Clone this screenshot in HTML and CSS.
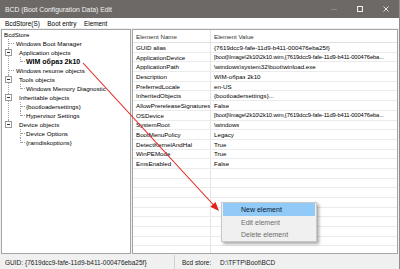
FILE: index.html
```html
<!DOCTYPE html>
<html lang="en">
<head>
    <meta charset="UTF-8">
    <title>BCD (Boot Configuration Data) Edit</title>
    <link rel="stylesheet" href="styles.css">
</head>
<body>
<div class="window">
    <div class="titlebar">
        <span class="title">BCD (Boot Configuration Data) Edit</span>
        <div class="controls">
            <span class="btn"><svg width="6" height="6" viewBox="0 0 6 6"><path d="M0 3.5h6" stroke="#8d8987" stroke-width="1"/></svg></span>
            <span class="btn"><svg width="6" height="6" viewBox="0 0 6 6"><rect x="0.5" y="0.5" width="5" height="5" fill="none" stroke="#eeeeee" stroke-width="1"/></svg></span>
            <span class="btn"><svg width="6" height="6" viewBox="0 0 6 6"><path d="M0.5 0.5l5 5M5.5 0.5l-5 5" stroke="#eeeeee" stroke-width="0.9"/></svg></span>
        </div>
    </div>

    <div class="menubar">
        <span>BcdStore(S)</span>
        <span>Boot entry</span>
        <span>Element</span>
    </div>

    <div class="main">
        <div class="tree">
            <div class="node root">BcdStore</div>
            <ul class="branch">
                <li><div class="node"><i class="stub"></i>Windows Boot Manager</div></li>
                <li>
                    <div class="node"><i class="box"></i>Application objects</div>
                    <ul class="branch sub">
                        <li><div class="node"><i class="stub"></i><b>WIM образ 2k10</b></div></li>
                    </ul>
                </li>
                <li><div class="node"><i class="stub"></i>Windows resume objects</div></li>
                <li>
                    <div class="node"><i class="box"></i>Tools objects</div>
                    <ul class="branch sub">
                        <li><div class="node"><i class="stub"></i>Windows Memory Diagnostic</div></li>
                    </ul>
                </li>
                <li>
                    <div class="node"><i class="box"></i>Inheritable objects</div>
                    <ul class="branch sub">
                        <li><div class="node"><i class="stub"></i>{bootloadersettings}</div></li>
                        <li><div class="node"><i class="stub"></i>Hypervisor Settings</div></li>
                    </ul>
                </li>
                <li>
                    <div class="node"><i class="box"></i>Device objects</div>
                    <ul class="branch sub">
                        <li><div class="node"><i class="stub"></i>Device Options</div></li>
                        <li><div class="node"><i class="stub"></i>{ramdiskoptions}</div></li>
                    </ul>
                </li>
            </ul>
        </div>

        <div class="list">
            <div class="lrow head"><span class="name">Element Name</span><span class="value">Element Value</span></div>
            <div class="lrow"><span class="name">GUID alias</span><span class="value">{7619dcc9-fafe-11d9-b411-000476eba25f}</span></div>
            <div class="lrow"><span class="name">ApplicationDevice</span><span class="value long">[boot]\Image\2k10\2k10.wim,{7619dcc9-fafe-11d9-b411-000476eba...</span></div>
            <div class="lrow"><span class="name">ApplicationPath</span><span class="value">\windows\system32\boot\winload.exe</span></div>
            <div class="lrow"><span class="name">Description</span><span class="value">WIM-образ 2k10</span></div>
            <div class="lrow"><span class="name">PreferredLocale</span><span class="value">en-US</span></div>
            <div class="lrow"><span class="name">InheritedObjects</span><span class="value">{bootloadersettings}...</span></div>
            <div class="lrow"><span class="name">AllowPrereleaseSignatures</span><span class="value">False</span></div>
            <div class="lrow"><span class="name">OSDevice</span><span class="value long">[boot]\Image\2k10\2k10.wim,{7619dcc9-fafe-11d9-b411-000476eba...</span></div>
            <div class="lrow"><span class="name">SystemRoot</span><span class="value">\windows</span></div>
            <div class="lrow"><span class="name">BootMenuPolicy</span><span class="value">Legacy</span></div>
            <div class="lrow"><span class="name">DetectKernelAndHal</span><span class="value">True</span></div>
            <div class="lrow"><span class="name">WinPEMode</span><span class="value">True</span></div>
            <div class="lrow"><span class="name">EmsEnabled</span><span class="value">False</span></div>
            <div class="lrow"><span class="name"></span><span class="value"></span></div>
            <div class="lrow"><span class="name"></span><span class="value"></span></div>
            <div class="lrow"><span class="name"></span><span class="value"></span></div>
            <div class="lrow"><span class="name"></span><span class="value"></span></div>
            <div class="lrow"><span class="name"></span><span class="value"></span></div>
            <div class="lrow"><span class="name"></span><span class="value"></span></div>
            <div class="lrow"><span class="name"></span><span class="value"></span></div>
            <div class="lrow"><span class="name"></span><span class="value"></span></div>
            <div class="lrow"><span class="name"></span><span class="value"></span></div>
        </div>
    </div>

    <div class="statusbar">
        <div class="sb-part guid"><span class="label">GUID:</span><span>{7619dcc9-fafe-11d9-b411-000476eba25f}</span></div>
        <div class="sb-part store"><span class="label">Bcd store:</span><span>D:\TFTP\Boot\BCD</span></div>
    </div>

    <!-- context menu over the element list -->
    <div class="ctxmenu">
        <div class="item active">New element</div>
        <div class="item">Edit element</div>
        <div class="item">Delete element</div>
    </div>

    <svg class="arrow" width="400" height="269" viewBox="0 0 400 269">
        <line x1="83" y1="63" x2="214" y2="205.5" stroke="#e3221c" stroke-width="1.1"/>
        <polygon points="219,211 210.3,206.8 215.5,202" fill="#e3221c"/>
    </svg>
</div>
</body>
</html>
```

FILE: styles.css
```css
html, body {
    margin: 0;
    padding: 0;
}
body {
    font-family: 'Liberation Sans', Arial, sans-serif;
    background: #fff;
    color: #000;
}
.window {
    position: relative;
    width: 400px;
    height: 269px;
    overflow: hidden;
    box-sizing: border-box;
    border-right: 1px solid #8f8f8f;
    background: #f0f0f0;
}
.titlebar {
    height: 18px;
    background: #6d6967;
    display: flex;
    align-items: center;
    justify-content: space-between;
}
.title {
    padding-left: 5px;
    font-size: 6.8px;
    color: #f2f2f2;
}
.controls {
    display: flex;
    height: 100%;
}
.btn {
    width: 26px;
    height: 100%;
    display: flex;
    align-items: center;
    justify-content: center;
}
.menubar {
    height: 10px;
    background: #fff;
    display: flex;
    align-items: center;
    padding-left: 5px;
    font-size: 6.4px;
}
.menubar span {
    margin-right: 7.5px;
}
.main {
    height: 227px;
    box-sizing: border-box;
    padding: 1px 1px 1px 1px;
    display: flex;
    gap: 1px;
}
.tree {
    width: 130px;
    flex-shrink: 0;
    box-sizing: border-box;
    border: 1px solid #a5a5a5;
    background: #fff;
    padding-left: 2px;
    font-size: 6.2px;
    overflow: hidden;
}
.node {
    height: 9px;
    line-height: 9px;
    display: flex;
    align-items: center;
    white-space: nowrap;
}
.node b {
    font-size: 7px;
}
.branch {
    list-style: none;
    margin: 0 0 0 4px;
    padding: 0;
}
.branch > li {
    padding-left: 1px;
    background-image: repeating-linear-gradient(to bottom, #a0a0a0 0 1px, transparent 1px 2px);
    background-size: 1px 100%;
    background-repeat: no-repeat;
}
.branch > li:last-child {
    background-size: 1px 5px;
}
.branch.sub {
    margin-left: 11px;
}
.stub {
    display: inline-block;
    width: 5px;
    height: 0;
    border-top: 1px dotted #a0a0a0;
    margin-right: 2px;
}
.sub .stub {
    width: 4px;
    margin-right: 1px;
}
.box {
    position: relative;
    display: inline-block;
    width: 7px;
    height: 7px;
    box-sizing: border-box;
    border: 1px solid #9a9a9a;
    background: #fff;
    margin-left: -4px;
    margin-right: 7px;
}
.box::after {
    content: "";
    position: absolute;
    left: 1px;
    top: 2px;
    width: 3px;
    height: 1px;
    background: #333;
}
.list {
    flex: 1;
    box-sizing: border-box;
    border: 1px solid #a5a5a5;
    background: #fff;
    overflow: hidden;
    font-size: 6.2px;
}
.lrow {
    display: flex;
    height: 9.7px;
    box-sizing: border-box;
    border-bottom: 1px solid #ebebeb;
    white-space: nowrap;
}
.lrow.head {
    height: 13px;
    color: #333;
    border-bottom-color: #e2e2e2;
}
.name {
    width: 78px;
    flex-shrink: 0;
    box-sizing: border-box;
    padding-left: 3px;
    border-right: 1px solid #e4e4e4;
    display: flex;
    align-items: center;
    overflow: hidden;
}
.value {
    padding-left: 3px;
    display: flex;
    align-items: center;
    overflow: hidden;
}
.value.long {
    font-size: 5.8px;
    letter-spacing: -0.12px;
}
.statusbar {
    height: 14px;
    display: flex;
    font-size: 6.5px;
    color: #222;
}
.sb-part {
    display: flex;
    align-items: center;
    height: 100%;
    box-sizing: border-box;
}
.sb-part.guid {
    width: 175px;
    padding-left: 5px;
    border-right: 1px solid #d2d2d2;
}
.sb-part.guid .label {
    width: 20px;
}
.sb-part.store {
    padding-left: 7px;
}
.sb-part.store .label {
    width: 38px;
}
.ctxmenu {
    position: absolute;
    left: 221px;
    top: 202px;
    width: 96px;
    height: 40px;
    box-sizing: border-box;
    padding: 0 1px;
    background: #f0f0f0;
    border: 1px solid #c8c8c8;
    box-shadow: 2px 2px 3px rgba(0, 0, 0, 0.35);
    font-size: 7px;
}
.ctxmenu .item {
    height: 12.6px;
    padding-left: 18px;
    display: flex;
    align-items: center;
    color: #6d6d6d;
}
.ctxmenu .item.active {
    height: 13px;
    background: #91c9f7;
    color: #0a1a33;
}
.arrow {
    position: absolute;
    left: 0;
    top: 0;
    pointer-events: none;
}
```
